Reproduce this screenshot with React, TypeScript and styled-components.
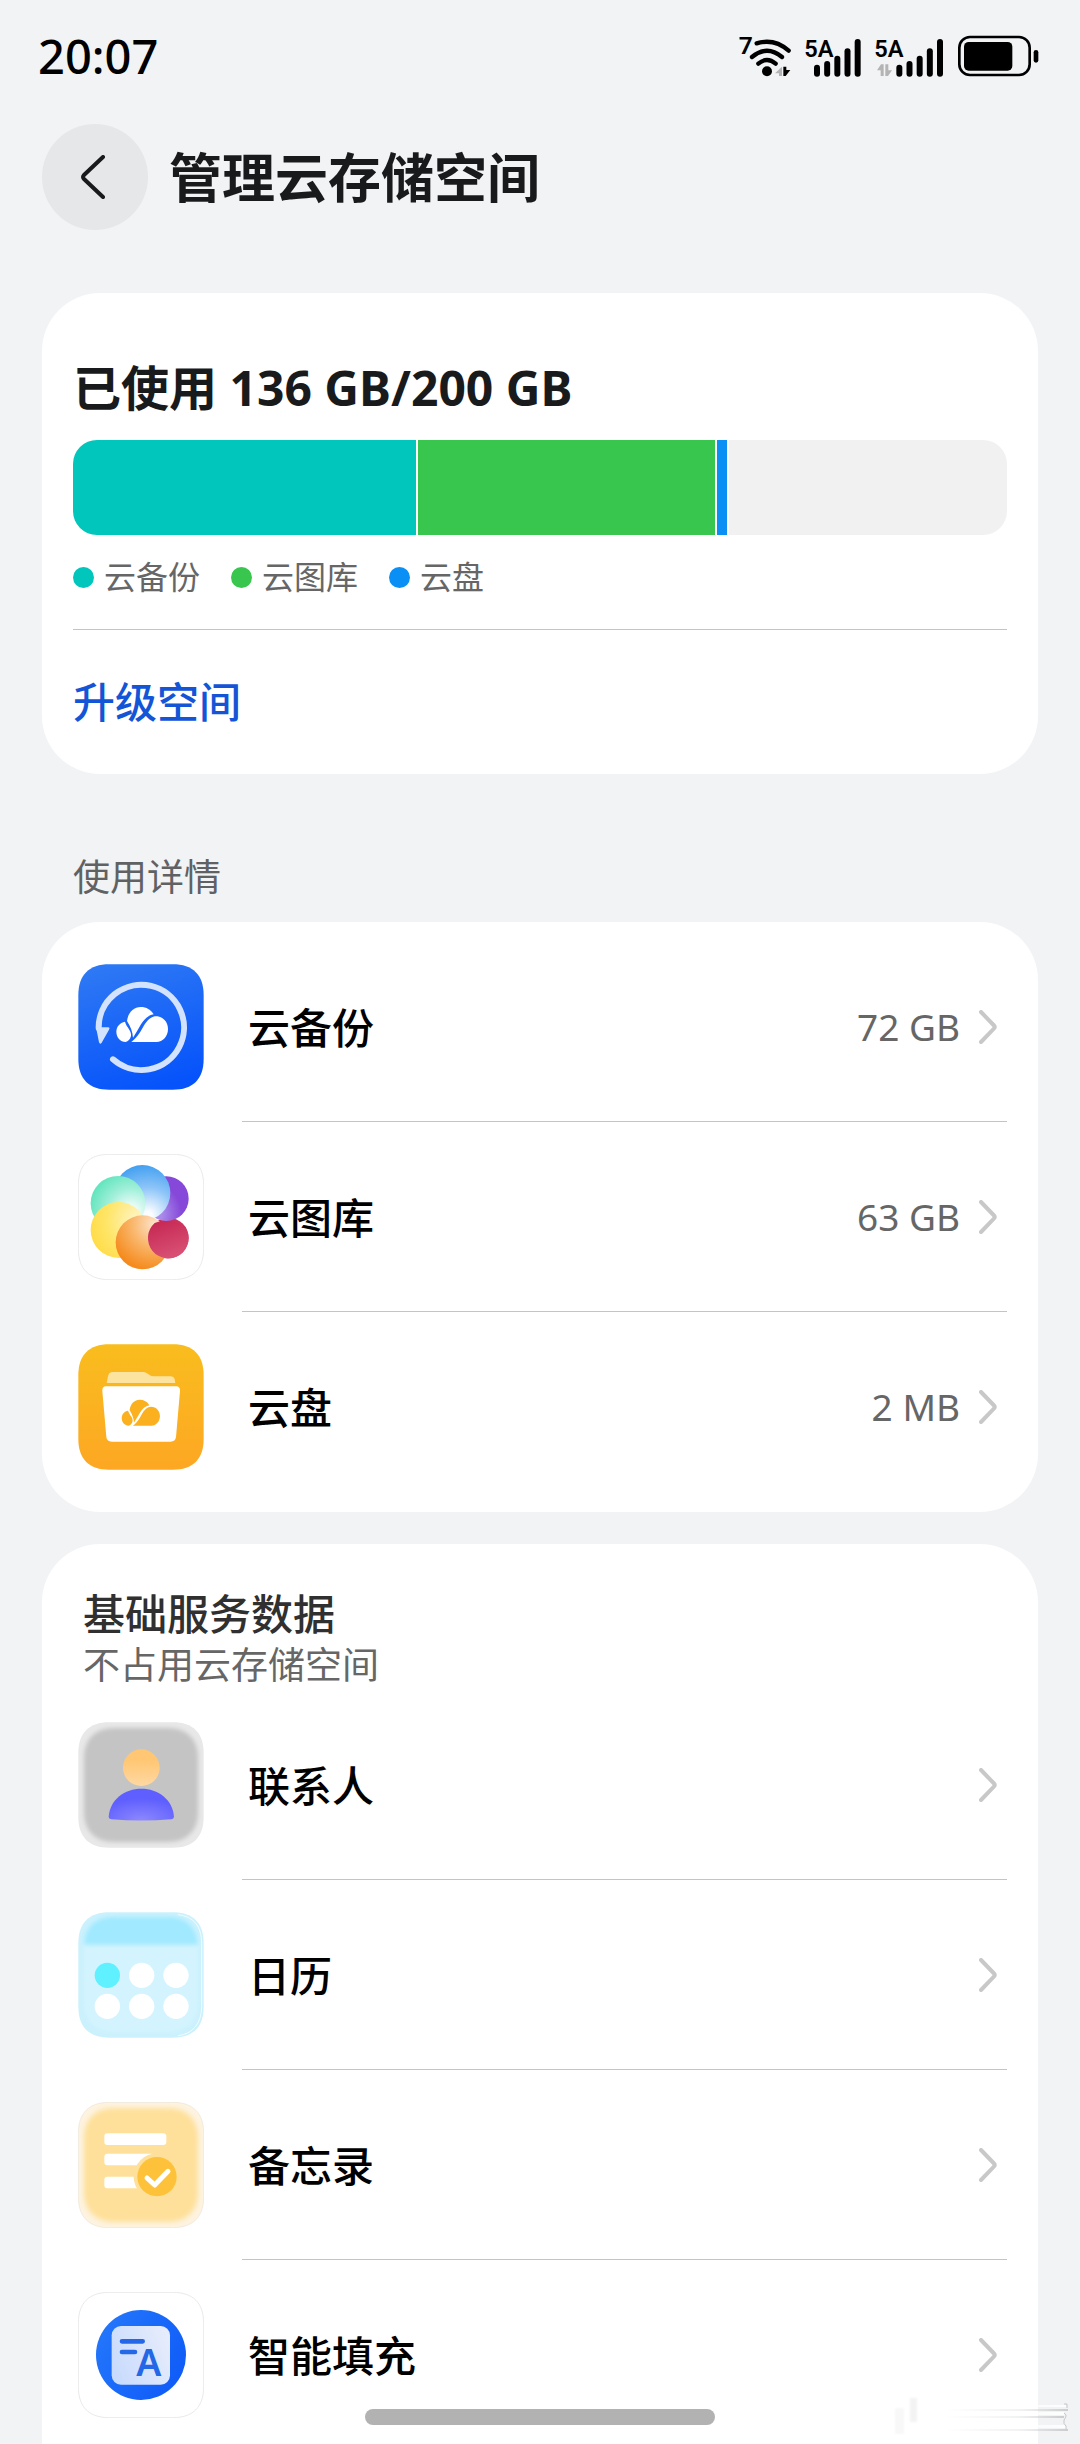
import React from "react";
import styled, { createGlobalStyle } from "styled-components";

const GlobalStyle = createGlobalStyle`
  *, *::before, *::after { box-sizing: border-box; }
  body {
    margin: 0;
    background: #f1f3f5;
    font-family: "Noto Sans", "Noto Sans CJK SC", sans-serif;
    color: #000;
  }
`;

const Screen = styled.div`
  position: relative;
  display: flex;
  flex-direction: column;
  height: 100vh;
  overflow: hidden;
  background: #f1f3f5;
`;

const StatusBar = styled.div`
  display: flex;
  flex: none;
  align-items: center;
  justify-content: space-between;
  height: 111px;
  padding: 0 40px 0 38px;
`;

const Clock = styled.time`
  font-size: 47px;
  font-weight: 500;
  line-height: 56px;
`;

const StatusIcons = styled.div`
  display: flex;
  align-items: center;
  gap: 12px;
  font-family: Roboto, sans-serif;
  font-weight: 600;
`;

const Header = styled.header`
  display: flex;
  flex: none;
  align-items: center;
  gap: 21px;
  padding: 13px 42px 63px;
`;

const BackButton = styled.button`
  display: flex;
  align-items: center;
  justify-content: center;
  width: 106px;
  height: 106px;
  padding: 0;
  border: 0;
  border-radius: 50%;
  background: #e6e7e9;
`;

const Title = styled.h1`
  margin: 0;
  padding-top: 2px;
  color: #191a1c;
  font-size: 53px;
  font-weight: 700;
  line-height: 64px;
`;

const Content = styled.main`
  flex: 1;
  min-height: 0;
  padding: 0 42px;
  overflow: hidden;
`;

const Card = styled.section`
  border-radius: 58px;
  background: #fff;
`;

const UsageCard = styled(Card)`
  padding: 67px 31px 0;
`;

const ListCard = styled(Card)`
  padding: 10px 31px;
`;

const ServiceCard = styled(Card)`
  margin-top: 32px;
  padding: 44px 31px 80px;
`;

const UsageTitle = styled.h2`
  margin: 0;
  color: #191a1c;
  font-size: 48px;
  font-weight: 700;
  line-height: 56px;
`;

const UsageBar = styled.div`
  display: flex;
  gap: 2px;
  height: 95px;
  margin-top: 24px;
  overflow: hidden;
  border-radius: 24px;
`;

const Segment = styled.div<{ $color: string; $share: number }>`
  flex: ${(p) => p.$share} 0 0;
  background: ${(p) => p.$color};
`;

const Legend = styled.ul`
  display: flex;
  gap: 31px;
  margin: 21px 0 31px;
  padding: 0;
  list-style: none;
`;

const LegendItem = styled.li<{ $color: string }>`
  display: flex;
  align-items: center;
  gap: 10px;
  color: #666;
  font-size: 32px;
  line-height: 42px;

  &::before {
    content: "";
    width: 21px;
    height: 21px;
    border-radius: 50%;
    background: ${(p) => p.$color};
  }
`;

const UpgradeLink = styled.a`
  display: block;
  padding: 46px 0;
  border-top: 1px solid #c2c4c5;
  color: #1355d6;
  font-size: 42px;
  font-weight: 500;
  line-height: 52px;
  text-decoration: none;
`;

const SectionLabel = styled.h2`
  margin: 79px 31px 21px;
  color: #606163;
  font-size: 37px;
  font-weight: 400;
  line-height: 48px;
`;

const ServiceTitle = styled.h2`
  margin: 0;
  padding-left: 10px;
  color: #303030;
  font-size: 42px;
  font-weight: 500;
  line-height: 52px;
`;

const ServiceNote = styled.p`
  margin: 0;
  padding-left: 10px;
  color: #666;
  font-size: 37px;
  line-height: 50px;
`;

const List = styled.ul`
  margin: 0;
  padding: 0;
  list-style: none;
`;

const RowLink = styled.a`
  display: flex;
  align-items: center;
  gap: 38px;
  height: 190px;
  padding-left: 5px;
  color: #000;
  text-decoration: none;
`;

const RowBody = styled.span<{ $divided: boolean }>`
  display: flex;
  flex: 1;
  align-items: center;
  height: 100%;
  padding: 0 10px 0 6px;
  border-bottom: 1px solid ${(p) => (p.$divided ? "#c2c4c5" : "transparent")};
`;

const RowName = styled.span`
  flex: 1;
  padding-top: 2px;
  font-size: 42px;
  font-weight: 500;
  line-height: 52px;
`;

const RowValue = styled.span`
  margin-right: 19px;
  color: #666;
  font-size: 37px;
  line-height: 48px;
`;

const HomeIndicator = styled.div`
  position: absolute;
  bottom: 19px;
  left: 50%;
  width: 350px;
  height: 16px;
  margin-left: -175px;
  border-radius: 8px;
  background: #b2b2b2;
`;

const Smudge = styled.svg`
  position: absolute;
  right: 6px;
  bottom: 4px;
`;

const BARS = [132, 121, 105, 83, 55];

function SignalBars({ start }: { start: number }) {
  return (
    <g>
      {BARS.map((top, i) => (
        <rect key={top} x={start + i * 30.5 - 9} y={top} width="18" height={168 - top} rx="9" />
      ))}
    </g>
  );
}

function WifiIcon() {
  return (
    <svg width="56" height="48" viewBox="51 34 168 144" aria-label="Wi-Fi 7">
      <text x="59" y="100" fontSize="74">7</text>
      <g fill="none" stroke="#000" strokeWidth="13" strokeLinecap="round">
        <path d="M113 68Q166 52 209 90" />
        <path d="M99 109Q144 72 189 109" />
        <path d="M118 129Q144 107 170 129" />
      </g>
      <circle cx="144" cy="152" r="15" />
      <path d="M189 138v28h-9v-8h-12z" fill="#b4b4b4" />
      <path d="M193 138h9v10h12l-14 18h-7z" />
    </svg>
  );
}

function SignalIcon() {
  return (
    <svg width="58" height="48" viewBox="249 34 174 144" aria-label="5A">
      <text x="250" y="108" fontSize="71">5A</text>
      <SignalBars start={288} />
    </svg>
  );
}

function SignalDataIcon() {
  return (
    <svg width="70" height="48" viewBox="459 34 210 144" aria-label="5A">
      <text x="460" y="108" fontSize="71">5A</text>
      <SignalBars start={535} />
      <path d="M468 149L480 131h8v35h-9v-17zM493 131h9v18h11l-12 17h-8z" fill="#b4b4b4" />
    </svg>
  );
}

function BatteryIcon() {
  return (
    <svg width="84" height="48" viewBox="708 38 252 144">
      <rect x="718" y="53" width="211" height="114" rx="32" fill="none" stroke="#000" strokeWidth="8" />
      <rect x="732" y="68" width="145" height="86" rx="14" />
      <rect x="941" y="92" width="14" height="38" rx="7" />
    </svg>
  );
}

function BackIcon() {
  return (
    <svg width="30" height="44" viewBox="0 0 30 44" fill="none" stroke="#191a1c" strokeWidth="4" strokeLinecap="round">
      <path d="M23 2L4 20Q2 22 4 24L23 42" />
    </svg>
  );
}

function ChevronIcon() {
  return (
    <svg width="18" height="34" viewBox="0 0 18 34" fill="none" stroke="#c8c8c8" strokeWidth="4" strokeLinecap="round">
      <path d="M2 2L15 15.5Q16.4 17 15 18.5L2 32" />
    </svg>
  );
}

const TILE =
  "M94 1H284C345 1 377 33 377 94V284C377 345 345 377 284 377H94C33 377 1 345 1 284V94C1 33 33 1 94 1Z";
const INNER_TILE =
  "M108 18H270C326 18 360 52 360 108V270C360 326 326 360 270 360H108C52 360 18 326 18 270V108C18 52 52 18 108 18Z";

const AppIcon = styled.svg.attrs({ viewBox: "0 0 378 378", "aria-hidden": true })`
  flex: none;
  width: 126px;
  height: 126px;
`;

function CloudMark() {
  return (
    <g>
      <path d="M160 234C180 219 188 201 197 186C207 170 219 157 234 157C255 157 270 174 270 195C270 217 255 234 235 234Z" />
      <path d="M147 171C150 146 167 129 188 129C205 129 219 137 227 151C210 154 199 166 189 181C181 195 173 209 165 221C164 204 158 188 147 171Z" />
      <path d="M141 173C145 190 162 200 159 216C157 226 150 232 143 234C127 234 115 220 115 203C115 188 126 175 141 173Z" />
    </g>
  );
}

function BackupIcon() {
  return (
    <AppIcon>
      <linearGradient id="backup" x1="0.3" y1="0" x2="0.6" y2="1">
        <stop offset="0" stopColor="#2d78f4" />
        <stop offset="1" stopColor="#0653fb" />
      </linearGradient>
      <path d={TILE} fill="url(#backup)" />
      <path d="M105 286A128 128 0 1 0 62 192" fill="none" stroke="#d3e2fd" strokeWidth="18" strokeLinecap="round" />
      <path d="M54 190H90Q97 190 93 197L71 236Q66 243 63 235Z" fill="#d3e2fd" />
      <g fill="#fff"><CloudMark /></g>
    </AppIcon>
  );
}

function GalleryIcon() {
  return (
    <AppIcon>
      <radialGradient id="gPurple" gradientUnits="userSpaceOnUse" cx="215" cy="180" r="120">
        <stop offset="0.3" stopColor="#a98bea" /><stop offset="0.8" stopColor="#8548d8" />
      </radialGradient>
      <radialGradient id="gBlue" gradientUnits="userSpaceOnUse" cx="210" cy="185" r="155">
        <stop offset="0.08" stopColor="#fafdff" /><stop offset="0.55" stopColor="#8cc4f8" /><stop offset="1" stopColor="#419ff0" />
      </radialGradient>
      <radialGradient id="gGreen" gradientUnits="userSpaceOnUse" cx="160" cy="175" r="145">
        <stop offset="0.1" stopColor="#f2fdfb" /><stop offset="0.5" stopColor="#a0efd9" /><stop offset="1" stopColor="#50e2b4" />
      </radialGradient>
      <radialGradient id="gYellow" gradientUnits="userSpaceOnUse" cx="185" cy="200" r="150">
        <stop offset="0" stopColor="#fff6cf" /><stop offset="0.65" stopColor="#ffe669" /><stop offset="1" stopColor="#ffdc4a" />
      </radialGradient>
      <radialGradient id="gOrange" gradientUnits="userSpaceOnUse" cx="230" cy="210" r="140">
        <stop offset="0" stopColor="#fde3cb" /><stop offset="0.5" stopColor="#f9b568" /><stop offset="1" stopColor="#f58a1d" />
      </radialGradient>
      <linearGradient id="gRed" x1="0" y1="0" x2="0.4" y2="1">
        <stop offset="0" stopColor="#c32450" /><stop offset="1" stopColor="#d84f73" />
      </linearGradient>
      <path d={TILE} fill="#fff" stroke="#e6e6e6" strokeWidth="2.5" />
      <circle cx="271" cy="252" r="61" fill="url(#gRed)" />
      <circle cx="265" cy="134" r="67" fill="url(#gPurple)" />
      <circle cx="193" cy="117" r="84" fill="url(#gBlue)" />
      <circle cx="120" cy="148" r="82" fill="url(#gGreen)" />
      <circle cx="122" cy="228" r="84" fill="url(#gYellow)" />
      <circle cx="194" cy="265" r="81" fill="url(#gOrange)" />
      <path d="M230 207A61 61 0 1 0 322 219Q300 202 265 201Q245 200 230 207Z" fill="url(#gRed)" />
    </AppIcon>
  );
}

function DriveIcon() {
  return (
    <AppIcon>
      <linearGradient id="drive" x1="0" y1="0" x2="0" y2="1">
        <stop offset="0" stopColor="#f9bd1e" />
        <stop offset="1" stopColor="#fda723" />
      </linearGradient>
      <path d={TILE} fill="url(#drive)" />
      <path d="M86 117L90 97Q92 84 105 84H196Q203 84 209 89L216 94Q220 97 226 97H277Q288 97 290 106L292 117Z" fill="#fde3a0" />
      <path d="M84 127H294Q307 127 306 141L294 279Q292 293 278 293H101Q87 293 85 279L73 141Q72 127 84 127Z" fill="#fff" />
      <g fill="#fbb01f" transform="translate(46 72) scale(.74)"><CloudMark /></g>
    </AppIcon>
  );
}

function SoftBlur({ id, size }: { id: string; size: number }) {
  return (
    <filter id={id} x="-10%" y="-10%" width="120%" height="120%">
      <feGaussianBlur stdDeviation={size} />
    </filter>
  );
}

function ContactsIcon() {
  return (
    <AppIcon>
      <SoftBlur id="contactsBlur" size={7} />
      <linearGradient id="head" x1="0" y1="0" x2="0" y2="1">
        <stop offset="0.3" stopColor="#ffc774" /><stop offset="1" stopColor="#ffd8a2" />
      </linearGradient>
      <radialGradient id="torso" cx="0.5" cy="1" r="0.7">
        <stop offset="0" stopColor="#8d88ff" /><stop offset="1" stopColor="#5e5ffe" />
      </radialGradient>
      <path d={TILE} fill="#e8e8e8" />
      <path d={INNER_TILE} fill="#c4c4c4" filter="url(#contactsBlur)" />
      <circle cx="190" cy="137" r="55" fill="url(#head)" />
      <path d="M92 284C96 232 140 200 190 200C240 200 284 232 288 284Q288 291 280 292Q190 299 100 292Q92 291 92 284Z" fill="url(#torso)" />
    </AppIcon>
  );
}

function CalendarIcon() {
  return (
    <AppIcon>
      <SoftBlur id="calendarBlur" size={6} />
      <path d={TILE} fill="#cbf1fd" />
      <path d={INNER_TILE} fill="#d3f4fe" filter="url(#calendarBlur)" />
      <path d="M18 98C20 42 56 14 108 14H270C322 14 356 42 360 98Z" fill="#a0e9ff" filter="url(#calendarBlur)" />
      <path d="M300 8C348 14 370 42 371 94V284C370 336 344 366 300 371" fill="none" stroke="#f2fcff" strokeWidth="3" />
      {[190, 283].map((cy) =>
        [88, 191, 294].map((cx) => (
          <circle key={`${cx}-${cy}`} cx={cx} cy={cy} r="38" fill={cx === 88 && cy === 190 ? "#5ff1ff" : "#fff"} />
        ))
      )}
    </AppIcon>
  );
}

function NotesIcon() {
  return (
    <AppIcon>
      <SoftBlur id="notesBlur" size={8} />
      <path d={TILE} fill="#fdf3e0" stroke="#ebe4d6" strokeWidth="2" />
      <path d={INNER_TILE} fill="#fee09a" filter="url(#notesBlur)" />
      <rect x="79" y="94" width="186" height="35" rx="9" fill="#fff" />
      <rect x="79" y="155" width="150" height="35" rx="9" fill="#fff" />
      <rect x="79" y="224" width="130" height="35" rx="9" fill="#fff" />
      <circle cx="237" cy="224" r="70" fill="#fee09a" />
      <circle cx="237" cy="224" r="59" fill="#fec23a" />
      <path d="M207 228L230 249L270 208" fill="none" stroke="#fff" strokeWidth="15" strokeLinecap="round" strokeLinejoin="round" />
    </AppIcon>
  );
}

function AutofillIcon() {
  return (
    <AppIcon>
      <linearGradient id="disc" x1="0" y1="0.2" x2="1" y2="0.8">
        <stop offset="0" stopColor="#2377fb" /><stop offset="1" stopColor="#0f5af8" />
      </linearGradient>
      <linearGradient id="sheet" x1="0" y1="0.7" x2="1" y2="0.3">
        <stop offset="0" stopColor="#c8dbfd" /><stop offset="1" stopColor="#e6ecfb" />
      </linearGradient>
      <path d={TILE} fill="#fff" stroke="#e4e4e4" strokeWidth="2.5" />
      <circle cx="189" cy="189" r="135" fill="url(#disc)" />
      <rect x="101" y="102" width="175" height="176" rx="28" fill="url(#sheet)" />
      <path d="M132 148H194M132 180H171" stroke="#2468e8" strokeWidth="14" strokeLinecap="round" />
      <text x="175" y="252" fontSize="112" fontWeight="600" fill="#2468e8">A</text>
    </AppIcon>
  );
}

type Entry = { name: string; value?: string; Icon: () => React.JSX.Element };

const usage: Entry[] = [
  { name: "云备份", value: "72 GB", Icon: BackupIcon },
  { name: "云图库", value: "63 GB", Icon: GalleryIcon },
  { name: "云盘", value: "2 MB", Icon: DriveIcon },
];

const services: Entry[] = [
  { name: "联系人", Icon: ContactsIcon },
  { name: "日历", Icon: CalendarIcon },
  { name: "备忘录", Icon: NotesIcon },
  { name: "智能填充", Icon: AutofillIcon },
];

const shares = [
  { name: "云备份", color: "#00c6bb", share: 343 },
  { name: "云图库", color: "#39c64f", share: 297 },
  { name: "云盘", color: "#0a90f5", share: 10 },
];

function EntryList({ entries }: { entries: Entry[] }) {
  return (
    <List>
      {entries.map(({ name, value, Icon }, i) => (
        <li key={name}>
          <RowLink href="#">
            <Icon />
            <RowBody $divided={i < entries.length - 1}>
              <RowName>{name}</RowName>
              {value && <RowValue>{value}</RowValue>}
              <ChevronIcon />
            </RowBody>
          </RowLink>
        </li>
      ))}
    </List>
  );
}

export default function App() {
  return (
    <Screen>
      <GlobalStyle />
      <StatusBar>
        <Clock>20:07</Clock>
        <StatusIcons>
          <WifiIcon />
          <SignalIcon />
          <SignalDataIcon />
          <BatteryIcon />
        </StatusIcons>
      </StatusBar>
      <Header>
        <BackButton aria-label="返回">
          <BackIcon />
        </BackButton>
        <Title>管理云存储空间</Title>
      </Header>
      <Content>
        <UsageCard>
          <UsageTitle>已使用 136 GB/200 GB</UsageTitle>
          <UsageBar>
            {shares.map((s) => (
              <Segment key={s.name} $color={s.color} $share={s.share} />
            ))}
            <Segment $color="#f1f1f1" $share={278} />
          </UsageBar>
          <Legend>
            {shares.map((s) => (
              <LegendItem key={s.name} $color={s.color}>{s.name}</LegendItem>
            ))}
          </Legend>
          <UpgradeLink href="#">升级空间</UpgradeLink>
        </UsageCard>
        <SectionLabel>使用详情</SectionLabel>
        <ListCard>
          <EntryList entries={usage} />
        </ListCard>
        <ServiceCard>
          <ServiceTitle>基础服务数据</ServiceTitle>
          <ServiceNote>不占用云存储空间</ServiceNote>
          <EntryList entries={services} />
        </ServiceCard>
      </Content>
      <HomeIndicator />
      <Smudge width="190" height="44" viewBox="0 0 190 44" aria-hidden="true">
        <linearGradient id="fadeLight" x1="0" x2="1">
          <stop offset="0" stopColor="#fff" stopOpacity="0" />
          <stop offset="1" stopColor="#fff" stopOpacity="0.9" />
        </linearGradient>
        <linearGradient id="fadeDark" x1="0" x2="1">
          <stop offset="0" stopColor="#d4d6d8" stopOpacity="0" />
          <stop offset="0.6" stopColor="#d4d6d8" stopOpacity="0.3" />
          <stop offset="1" stopColor="#c0c2c4" stopOpacity="0.8" />
        </linearGradient>
        <filter id="smear"><feGaussianBlur stdDeviation="1" /></filter>
        <g filter="url(#smear)">
          <rect x="26" y="2" width="7" height="24" fill="#f3f3f3" />
          <rect x="11" y="12" width="9" height="26" fill="#f8f8f8" />
        </g>
        <rect x="60" y="9" width="122" height="2" fill="url(#fadeLight)" />
        <rect x="60" y="16" width="120" height="3" fill="url(#fadeLight)" />
        <rect x="60" y="29" width="122" height="3" fill="url(#fadeLight)" />
        <rect x="60" y="13" width="124" height="2" fill="url(#fadeDark)" />
        <rect x="60" y="20" width="120" height="2" fill="url(#fadeDark)" />
        <rect x="60" y="33" width="124" height="2" fill="url(#fadeDark)" />
        <path d="M180 8h3v4M180 17q4 2 0 7q-1 4 2 6v3" fill="none" stroke="#c4c6c8" strokeWidth="1" />
      </Smudge>
    </Screen>
  );
}
